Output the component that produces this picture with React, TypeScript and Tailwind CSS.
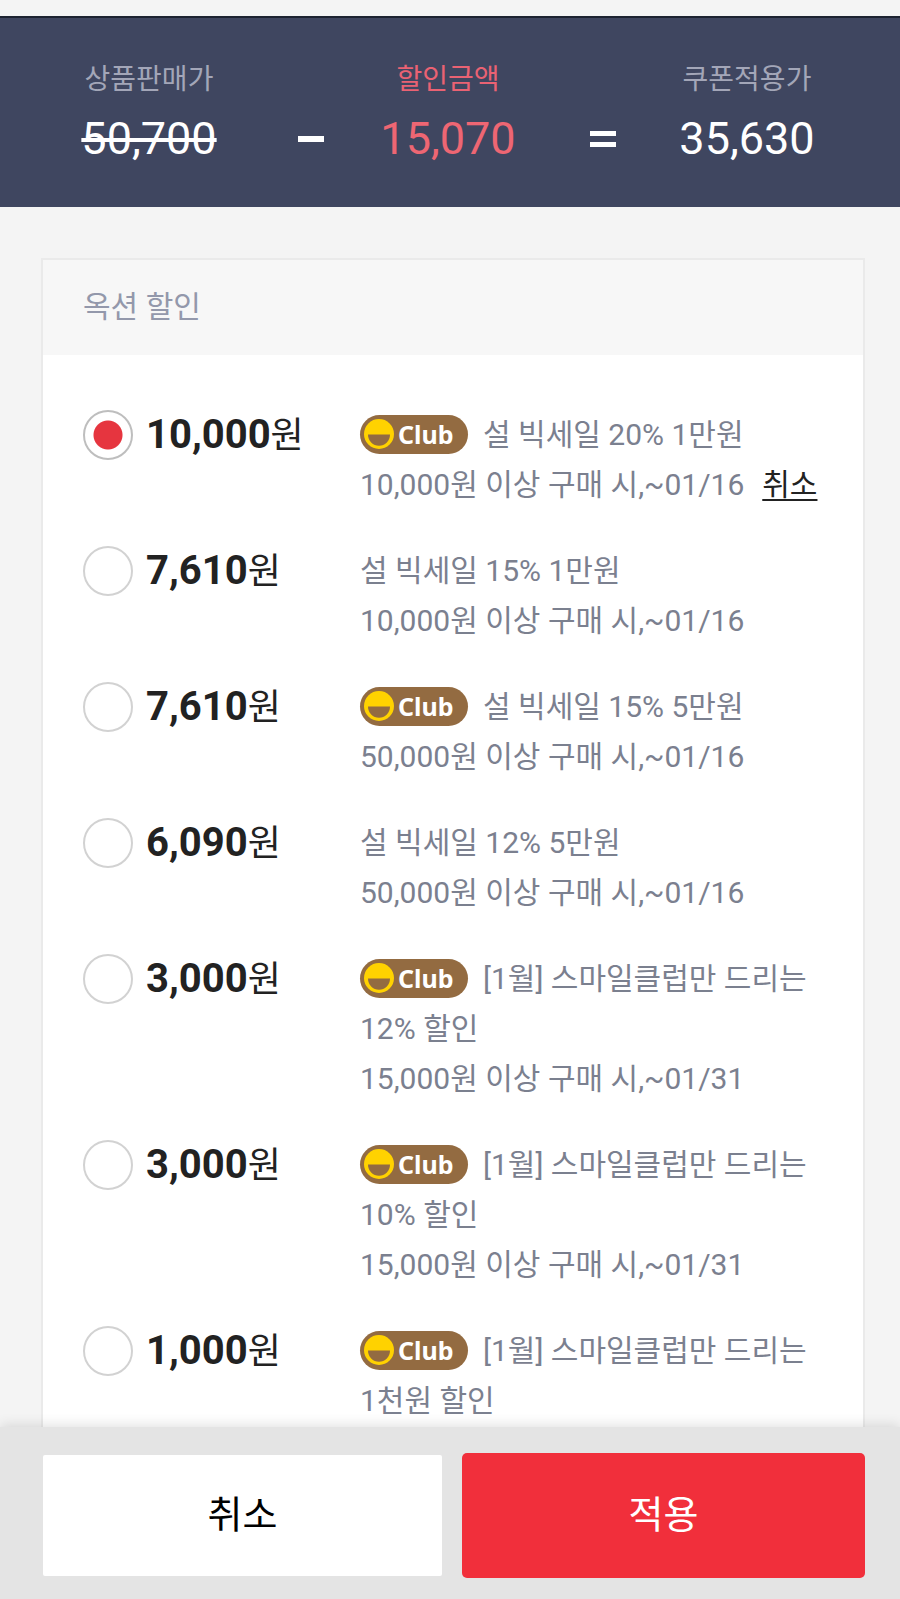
import { useState } from 'react';

const coupons = [
  { id: 'c1', price: '10,000', club: true, name: '설 빅세일', benefit: '20% 1만원', condition: '10,000원 이상 구매 시,~01/16' },
  { id: 'c2', price: '7,610', club: false, name: '설 빅세일', benefit: '15% 1만원', condition: '10,000원 이상 구매 시,~01/16' },
  { id: 'c3', price: '7,610', club: true, name: '설 빅세일', benefit: '15% 5만원', condition: '50,000원 이상 구매 시,~01/16' },
  { id: 'c4', price: '6,090', club: false, name: '설 빅세일', benefit: '12% 5만원', condition: '50,000원 이상 구매 시,~01/16' },
  { id: 'c5', price: '3,000', club: true, name: '[1월] 스마일클럽만 드리는', benefit: '12% 할인', condition: '15,000원 이상 구매 시,~01/31' },
  { id: 'c6', price: '3,000', club: true, name: '[1월] 스마일클럽만 드리는', benefit: '10% 할인', condition: '15,000원 이상 구매 시,~01/31' },
  { id: 'c7', price: '1,000', club: true, name: '[1월] 스마일클럽만 드리는', benefit: '1천원 할인', condition: '' },
];

function ClubBadge() {
  return (
    <span className="mr-[15px] mb-1.5 inline-flex h-[39px] w-[108px] items-center gap-1 rounded-full bg-[#936b41] pl-1 align-middle">
      <svg className="size-[30px] shrink-0" viewBox="0 0 30 30" aria-hidden="true">
        <circle cx="15" cy="15" r="15" fill="#ffd200" />
        <path d="M4 15.5h22a11 11.3 0 0 1-22 0z" fill="#936b41" />
      </svg>
      <span className="font-['Noto_Sans',sans-serif] text-[25px] leading-none font-bold text-white">Club</span>
    </span>
  );
}

function Amount(props: any) {
  const { label, labelClass, value, valueClass } = props;
  return (
    <div className="flex flex-col items-center">
      <dt className={`text-[28px] leading-10 ${labelClass}`}>{label}</dt>
      <dd className={`mt-[11px] text-[45px] leading-[56px] ${valueClass}`}>{value}</dd>
    </div>
  );
}

function CouponRow(props: any) {
  const { coupon, checked, onSelect, onCancel } = props;
  return (
    <li className="flex items-start">
      <label htmlFor={coupon.id} className="flex h-[50px] w-[277px] shrink-0 items-center gap-[13px] text-[#222]">
        <input
          id={coupon.id}
          type="radio"
          name="coupon"
          checked={checked}
          onChange={onSelect}
          aria-describedby={`${coupon.id}-desc`}
          className="size-[50px] shrink-0 appearance-none rounded-full border-2 border-[#d2d2d2] bg-white checked:border-[#bebebe] checked:bg-[radial-gradient(circle,#e6353f_14px,#fff_15px)]"
        />
        <span className="text-[40px] leading-[50px] font-bold">
          {coupon.price}
          <span className="text-[36px] font-normal">원</span>
        </span>
      </label>
      <div id={`${coupon.id}-desc`} className="min-w-0 flex-1 text-[30px] leading-[50px] break-keep text-[#7b808f]">
        <p>
          {coupon.club && <ClubBadge />}
          <span>{coupon.name}</span> <span>{coupon.benefit}</span>
        </p>
        {coupon.condition && (
          <p className="whitespace-nowrap">
            {coupon.condition}
            {checked && (
              <button type="button" onClick={onCancel} className="ml-[18px] text-[#222] underline decoration-2 underline-offset-4">취소</button>
            )}
          </p>
        )}
      </div>
    </li>
  );
}

function App() {
  const [selected, setSelected] = useState('c1');

  return (
    <div className="flex h-screen flex-col bg-[#f4f4f4] font-['Roboto','Noto_Sans_CJK_KR',sans-serif]">
      <header className="mt-4 border-t-2 border-[#1d2331] bg-[#3f4660] pt-[42px] pb-10">
        <dl className="grid grid-cols-[298fr_26fr_248fr_44fr_262fr_22fr]">
          <Amount label="상품판매가" labelClass="text-[#a3a6b8]" value="50,700" valueClass="text-white line-through" />
          <div className="flex items-end pb-5" aria-hidden="true">
            <svg className="h-4 w-full" viewBox="0 0 26 16"><path d="M0 5h26v6H0z" fill="#fff" /></svg>
          </div>
          <Amount label="할인금액" labelClass="text-[#ea6273]" value="15,070" valueClass="text-[#ee6673]" />
          <div className="flex items-end justify-end pb-5" aria-hidden="true">
            <svg className="h-4 w-[26px]" viewBox="0 0 26 16"><path d="M0 0h26v5H0zM0 11h26v5H0z" fill="#fff" /></svg>
          </div>
          <Amount label="쿠폰적용가" labelClass="text-[#a3a6b8]" value="35,630" valueClass="text-white" />
        </dl>
      </header>

      <main className="min-h-0 flex-1 overflow-y-auto pt-[51px] pr-[35px] pl-[41px] [scrollbar-width:none]">
        <section className="border-2 border-[#eaeaea] bg-white">
          <h2 className="bg-[#f7f7f7] px-10 pt-[23px] pb-[25px] text-[30px] leading-[47px] text-[#9398ab]">옥션 할인</h2>
          <ul className="flex flex-col gap-9 px-10 pt-[55px] pb-14">
            {coupons.map((coupon) => (
              <CouponRow
                key={coupon.id}
                coupon={coupon}
                checked={selected === coupon.id}
                onSelect={() => setSelected(coupon.id)}
                onCancel={() => setSelected('')}
              />
            ))}
          </ul>
        </section>
      </main>

      <footer className="relative grid grid-cols-[399fr_403fr] items-center gap-5 bg-[#e4e4e4] pt-[26px] pr-[35px] pb-[21px] pl-[43px] text-[38px] shadow-[0_-2px_12px_rgba(0,0,0,0.12)]">
        <button type="button" className="h-[121px] rounded-xs bg-white text-black">취소</button>
        <button type="button" className="h-[125px] rounded-[5px] bg-[#f12f3b] text-white">적용</button>
      </footer>
    </div>
  );
}
export default App;
